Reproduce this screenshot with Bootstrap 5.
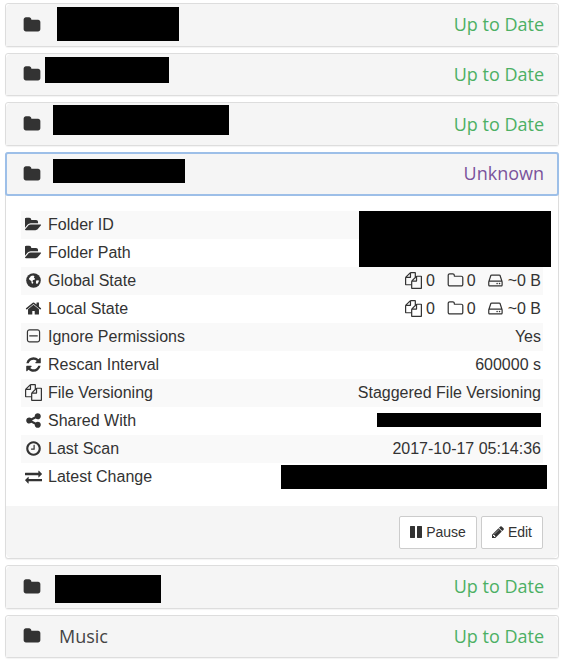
<!DOCTYPE html>
<html lang="en">
<head>
  <meta charset="utf-8" />
  <meta name="viewport" content="width=device-width, initial-scale=1" />
  <title>Folders</title>
  <link href="https://cdn.jsdelivr.net/npm/bootstrap@5.3.3/dist/css/bootstrap.min.css" rel="stylesheet">

  <style>
    body {
      background-color: #fff;
      color: #333;
      font-family: "Liberation Sans", Arial, sans-serif;
      font-size: 16px;
      height: 661px;
      overflow: hidden;
    }

    .folder-list {
      padding: 3px 11px 0 5px;
    }

    .folder-panel {
      border: 1px solid #ddd;
      border-radius: 3px;
      margin-bottom: 6px;
      box-shadow: 0 1px 1px rgba(0, 0, 0, .05);
      --bs-card-bg: #fff;
    }

    .folder-head {
      position: relative;
      height: 41.67px;
      padding: 0 14px 0 17px;
      background: #f5f5f5;
      border: 0;
      border-radius: 2px;
      font-family: "Open Sans", sans-serif;
      font-size: 18px;
    }

    .folder-panel.is-open .folder-head {
      height: 44px;
      margin: -1px -1px 0;
      padding: 0 13px 0 16px;
      border: 2px solid #9dbfe8;
      border-radius: 3px;
    }

    .folder-name {
      margin-left: 18px;
      color: #444;
    }

    .state-ok { color: #4cb064; }
    .state-unknown { color: #7a539c; }

    .ico {
      width: 1em;
      height: 1em;
      fill: currentColor;
      flex: none;
    }

    .head-ico {
      width: 18px;
      height: 18px;
      color: #333;
    }

    .cover {
      position: absolute;
      background: #000;
      z-index: 2;
    }

    .cover-1 { left: 51px; top: 3px; width: 122px; height: 34px; }
    .cover-2 { left: 39px; top: 3px; width: 124px; height: 26px; }
    .cover-3 { left: 47px; top: 2px; width: 176px; height: 30px; }
    .cover-4 { left: 46px; top: 5px; width: 132px; height: 24px; }
    .cover-5 { left: 49px; top: 9px; width: 106px; height: 28px; }
    .cover-id { right: -8px; top: -28px; width: 192px; height: 56px; }
    .cover-share { right: 2px; top: 6px; width: 164px; height: 14px; }
    .cover-change { right: -4px; top: 2px; width: 266px; height: 24px; }

    .folder-body {
      padding: 15px;
    }

    .detail-table {
      --bs-table-striped-bg: #f9f9f9;
      --bs-table-color: #333;
      --bs-table-striped-color: #333;
      margin: 0;
    }

    .detail-table td {
      position: relative;
      height: 28px;
      padding: 0 2px 0 4px;
      font-size: 16px;
      line-height: 28px;
      white-space: nowrap;
    }

    .detail-label {
      display: flex;
      align-items: center;
      gap: 6px;
    }

    .label-ico {
      width: 17px;
      height: 17px;
      color: #333;
    }

    .stat-ico {
      width: 17px;
      height: 17px;
      vertical-align: -3px;
      margin-left: 8px;
      margin-right: -2px;
      color: #333;
    }

    .stat-ico:first-child {
      margin-right: 0;
    }

    .folder-foot {
      height: 52px;
      padding: 9px 15px 0;
      background: #f5f5f5;
      border-top: 1px solid #f5f5f5;
    }

    .foot-btn {
      display: inline-flex;
      align-items: center;
      gap: 3px;
      height: 33px;
      padding: 0 10px 0 9px;
      background: #fff;
      border: 1px solid #ccc;
      border-radius: 2px;
      color: #333;
      font-size: 14px;
    }

    .foot-btn .ico {
      width: 14px;
      height: 14px;
    }
  </style>
</head>
<body>

  <svg width="0" height="0" class="d-block" aria-hidden="true">
    <symbol id="i-folder" viewBox="0 0 1792 1792"><path d="M1728 608v704q0 92-66 158t-158 66h-1216q-92 0-158-66t-66-158v-960q0-92 66-158t158-66h320q92 0 158 66t66 158v32h672q92 0 158 66t66 158z"/></symbol>
    <symbol id="i-open" viewBox="0 0 1920 1792"><path d="M1815 952q0 31-31 66l-336 396q-43 51-120.5 86.5t-143.5 35.5h-1088q-34 0-60.5-13t-26.5-43q0-31 31-66l336-396q43-51 120.5-86.5t143.5-35.5h1088q34 0 60.5 13t26.5 43zm-343-344v160h-832q-94 0-197 47.5t-164 119.5l-337 396-5 6q0-4-.5-12.5t-.5-12.5v-960q0-92 66-158t158-66h320q92 0 158 66t66 158v32h544q92 0 158 66t66 158z"/></symbol>
    <symbol id="i-globe" viewBox="0 0 1792 1792"><circle cx="896" cy="896" r="768"/><path fill="#fff" d="M620 420l250-60 130 110-70 130 120 90-30 130-170 20-70 140 100 130-60 130-120-60-30-230-210-130-40-170 120-90zM1180 900l230-30 60 90-120 240-140 60-60-180z"/></symbol>
    <symbol id="i-home" viewBox="0 0 1792 1792"><path d="M1472 992v480q0 26-19 45t-45 19h-384v-384h-256v384h-384q-26 0-45-19t-19-45v-480q0-1 .5-3t.5-3l575-474 575 474q1 2 1 6zm223-69l-62 74q-8 9-21 11h-3q-13 0-21-7l-692-577-692 577q-12 8-24 7-13-2-21-11l-62-74q-8-10-7-23.5t11-21.5l719-599q32-26 76-26t76 26l244 204v-195q0-14 9-23t23-9h192q14 0 23 9t9 23v408l219 182q10 8 11 21.5t-7 23.5z"/></symbol>
    <symbol id="i-minus" viewBox="0 0 1792 1792"><path d="M1344 800v64q0 14-9 23t-23 9h-832q-14 0-23-9t-9-23v-64q0-14 9-23t23-9h832q14 0 23 9t9 23zm128 448v-832q0-66-47-113t-113-47h-832q-66 0-113 47t-47 113v832q0 66 47 113t113 47h832q66 0 113-47t47-113zm128-832v832q0 119-84.5 203.5t-203.5 84.5h-832q-119 0-203.5-84.5t-84.5-203.5v-832q0-119 84.5-203.5t203.5-84.5h832q119 0 203.5 84.5t84.5 203.5z"/></symbol>
    <symbol id="i-refresh" viewBox="0 0 1792 1792"><path d="M1639 1056q0 5-1 7-64 268-268 434.5t-478 166.5q-146 0-282.5-55t-243.5-157l-129 129q-19 19-45 19t-45-19-19-45v-448q0-26 19-45t45-19h448q26 0 45 19t19 45-19 45l-137 137q71 66 161 102t187 36q134 0 250-65t186-179q11-17 53-117 8-23 30-23h192q13 0 22.5 9.5t9.5 22.5zm25-800v448q0 26-19 45t-45 19h-448q-26 0-45-19t-19-45 19-45l138-138q-148-137-349-137-134 0-250 65t-186 179q-11 17-53 117-8 23-30 23h-199q-13 0-22.5-9.5t-9.5-22.5v-7q65-268 270-434.5t480-166.5q146 0 284 55.5t245 156.5l130-129q19-19 45-19t45 19 19 45z"/></symbol>
    <symbol id="i-files" viewBox="0 0 1792 1792"><path d="M1696 384q40 0 68 28t28 68v1216q0 40-28 68t-68 28h-960q-40 0-68-28t-28-68v-288h-544q-40 0-68-28t-28-68v-672q0-40 20-88t48-76l408-408q28-28 76-48t88-20h416q40 0 68 28t28 68v328q68-40 128-40h416zm-544 213l-299 299h299v-299zm-640-384l-299 299h299v-299zm196 647l316-316v-416h-384v416q0 40-28 68t-68 28h-416v640h512v-256q0-40 20-88t48-76zm956 804v-1152h-384v416q0 40-28 68t-68 28h-416v640h896z"/></symbol>
    <symbol id="i-share" viewBox="0 0 1792 1792"><path d="M1344 1024q133 0 226.5 93.5t93.5 226.5-93.5 226.5-226.5 93.5-226.5-93.5-93.5-226.5q0-12 2-34l-360-180q-92 86-218 86-133 0-226.5-93.5t-93.5-226.5 93.5-226.5 226.5-93.5q126 0 218 86l360-180q-2-22-2-34 0-133 93.5-226.5t226.5-93.5 226.5 93.5 93.5 226.5-93.5 226.5-226.5 93.5q-126 0-218-86l-360 180q2 22 2 34t-2 34l360 180q92-86 218-86z"/></symbol>
    <symbol id="i-clock" viewBox="0 0 1792 1792"><path d="M1024 544v448q0 14-9 23t-23 9h-320q-14 0-23-9t-9-23v-64q0-14 9-23t23-9h224v-352q0-14 9-23t23-9h64q14 0 23 9t9 23zm416 352q0-148-73-273t-198-198-273-73-273 73-198 198-73 273 73 273 198 198 273 73 273-73 198-198 73-273zm224 0q0 209-103 385.5t-279.5 279.5-385.5 103-385.5-103-279.5-279.5-103-385.5 103-385.5 279.5-279.5 385.5-103 385.5 103 279.5 279.5 103 385.5z"/></symbol>
    <symbol id="i-exchange" viewBox="0 0 1792 1792"><path d="M1792 1184v192q0 13-9.5 22.5t-22.5 9.5h-1376v192q0 13-9.5 22.5t-22.5 9.5q-12 0-24-10l-319-320q-9-9-9-22 0-14 9-23l320-320q9-9 23-9 13 0 22.5 9.5t9.5 22.5v192h1376q13 0 22.5 9.5t9.5 22.5zm0-544q0 14-9 23l-320 320q-9 9-23 9-13 0-22.5-9.5t-9.5-22.5v-192h-1376q-13 0-22.5-9.5t-9.5-22.5v-192q0-13 9.5-22.5t22.5-9.5h1376v-192q0-14 9-23t23-9q12 0 24 10l319 319q9 9 9 23z"/></symbol>
    <symbol id="i-folder-o" viewBox="0 0 1792 1792"><path d="M1600 1312v-704q0-40-28-68t-68-28h-704q-40 0-68-28t-28-68v-64q0-40-28-68t-68-28h-320q-40 0-68 28t-28 68v960q0 40 28 68t68 28h1216q40 0 68-28t28-68zm128-704v704q0 92-66 158t-158 66h-1216q-92 0-158-66t-66-158v-960q0-92 66-158t158-66h320q92 0 158 66t66 158v32h672q92 0 158 66t66 158z"/></symbol>
    <symbol id="i-hdd" viewBox="0 0 1792 1792"><path d="M1040 1216q0 33-23.5 56.5t-56.5 23.5-56.5-23.5-23.5-56.5 23.5-56.5 56.5-23.5 56.5 23.5 23.5 56.5zm256 0q0 33-23.5 56.5t-56.5 23.5-56.5-23.5-23.5-56.5 23.5-56.5 56.5-23.5 56.5 23.5 23.5 56.5zm128 160v-320q0-13-9.5-22.5t-22.5-9.5h-1216q-13 0-22.5 9.5t-9.5 22.5v320q0 13 9.5 22.5t22.5 9.5h1216q13 0 22.5-9.5t9.5-22.5zm-1230-480h1180l-157-482q-4-13-16-21.5t-26-8.5h-782q-14 0-26 8.5t-16 21.5zm1358 160v320q0 66-47 113t-113 47h-1216q-66 0-113-47t-47-113v-320q0-25 16-75l197-606q17-53 63-86t101-33h782q55 0 101 33t63 86l197 606q16 50 16 75z"/></symbol>
    <symbol id="i-pause" viewBox="0 0 1792 1792"><path d="M1664 192v1408q0 26-19 45t-45 19h-512q-26 0-45-19t-19-45v-1408q0-26 19-45t45-19h512q26 0 45 19t19 45zm-896 0v1408q0 26-19 45t-45 19h-512q-26 0-45-19t-19-45v-1408q0-26 19-45t45-19h512q26 0 45 19t19 45z"/></symbol>
    <symbol id="i-pencil" viewBox="0 0 1792 1792"><path d="M491 1536l91-91-235-235-91 91v107h128v128h107zm523-928q0-22-22-22-10 0-17 7l-542 542q-7 7-7 17 0 22 22 22 10 0 17-7l542-542q7-7 7-17zm-54-192l416 416-832 832h-416v-416zm683 96q0 53-37 90l-166 166-416-416 166-165q36-38 90-38 53 0 91 38l235 234q37 39 37 91z"/></symbol>
  </svg>

  <div class="folder-list">

    <div class="card folder-panel">
      <div class="card-header folder-head d-flex align-items-center justify-content-between">
        <svg class="ico head-ico"><use href="#i-folder"/></svg>
        <span class="cover cover-1"></span>
        <span class="state-ok">Up to Date</span>
      </div>
    </div>

    <div class="card folder-panel">
      <div class="card-header folder-head d-flex align-items-center justify-content-between">
        <svg class="ico head-ico"><use href="#i-folder"/></svg>
        <span class="cover cover-2"></span>
        <span class="state-ok">Up to Date</span>
      </div>
    </div>

    <div class="card folder-panel">
      <div class="card-header folder-head d-flex align-items-center justify-content-between">
        <svg class="ico head-ico"><use href="#i-folder"/></svg>
        <span class="cover cover-3"></span>
        <span class="state-ok">Up to Date</span>
      </div>
    </div>

    <div class="card folder-panel is-open">
      <div class="card-header folder-head d-flex align-items-center justify-content-between">
        <svg class="ico head-ico"><use href="#i-folder"/></svg>
        <span class="cover cover-4"></span>
        <span class="state-unknown">Unknown</span>
      </div>
      <div class="card-body folder-body">
        <table class="table table-striped table-borderless detail-table">
          <tbody>
            <tr>
              <td><span class="detail-label"><svg class="ico label-ico"><use href="#i-open"/></svg>Folder ID</span></td>
              <td class="text-end"></td>
            </tr>
            <tr>
              <td><span class="detail-label"><svg class="ico label-ico"><use href="#i-open"/></svg>Folder Path</span></td>
              <td class="text-end"><span class="cover cover-id"></span></td>
            </tr>
            <tr>
              <td><span class="detail-label"><svg class="ico label-ico"><use href="#i-globe"/></svg>Global State</span></td>
              <td class="text-end"><svg class="ico stat-ico"><use href="#i-files"/></svg> 0 <svg class="ico stat-ico"><use href="#i-folder-o"/></svg> 0 <svg class="ico stat-ico"><use href="#i-hdd"/></svg> ~0 B</td>
            </tr>
            <tr>
              <td><span class="detail-label"><svg class="ico label-ico"><use href="#i-home"/></svg>Local State</span></td>
              <td class="text-end"><svg class="ico stat-ico"><use href="#i-files"/></svg> 0 <svg class="ico stat-ico"><use href="#i-folder-o"/></svg> 0 <svg class="ico stat-ico"><use href="#i-hdd"/></svg> ~0 B</td>
            </tr>
            <tr>
              <td><span class="detail-label"><svg class="ico label-ico"><use href="#i-minus"/></svg>Ignore Permissions</span></td>
              <td class="text-end">Yes</td>
            </tr>
            <tr>
              <td><span class="detail-label"><svg class="ico label-ico"><use href="#i-refresh"/></svg>Rescan Interval</span></td>
              <td class="text-end">600000 s</td>
            </tr>
            <tr>
              <td><span class="detail-label"><svg class="ico label-ico"><use href="#i-files"/></svg>File Versioning</span></td>
              <td class="text-end">Staggered File Versioning</td>
            </tr>
            <tr>
              <td><span class="detail-label"><svg class="ico label-ico"><use href="#i-share"/></svg>Shared With</span></td>
              <td class="text-end"><span class="cover cover-share"></span></td>
            </tr>
            <tr>
              <td><span class="detail-label"><svg class="ico label-ico"><use href="#i-clock"/></svg>Last Scan</span></td>
              <td class="text-end">2017-10-17 05:14:36</td>
            </tr>
            <tr>
              <td><span class="detail-label"><svg class="ico label-ico"><use href="#i-exchange"/></svg>Latest Change</span></td>
              <td class="text-end"><span class="cover cover-change"></span></td>
            </tr>
          </tbody>
        </table>
      </div>
      <div class="card-footer folder-foot d-flex justify-content-end gap-1">
        <button type="button" class="btn foot-btn"><svg class="ico"><use href="#i-pause"/></svg>Pause</button>
        <button type="button" class="btn foot-btn"><svg class="ico"><use href="#i-pencil"/></svg>Edit</button>
      </div>
    </div>

    <div class="card folder-panel">
      <div class="card-header folder-head d-flex align-items-center justify-content-between">
        <svg class="ico head-ico"><use href="#i-folder"/></svg>
        <span class="cover cover-5"></span>
        <span class="state-ok">Up to Date</span>
      </div>
    </div>

    <div class="card folder-panel">
      <div class="card-header folder-head d-flex align-items-center justify-content-between">
        <span class="d-flex align-items-center">
          <svg class="ico head-ico"><use href="#i-folder"/></svg>
          <span class="folder-name">Music</span>
        </span>
        <span class="state-ok">Up to Date</span>
      </div>
    </div>

  </div>
</body>
</html>
